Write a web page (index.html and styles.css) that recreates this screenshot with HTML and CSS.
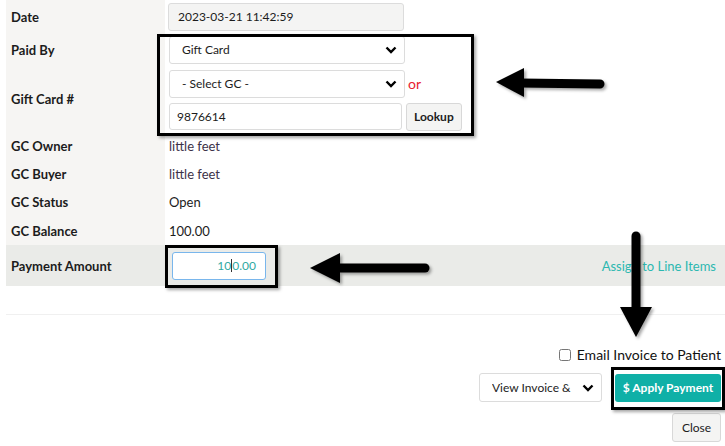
FILE: index.html
```html
<!DOCTYPE html>
<html lang="en">
<head>
    <meta charset="UTF-8">
    <title>Gift Card Payment</title>
    <link rel="stylesheet" href="styles.css">
</head>
<body>
    <div class="page">
        <div class="form">
            <div class="row row-date">
                <div class="label">Date</div>
                <div class="value">
                    <input type="text" class="field field-ro" value="2023-03-21 11:42:59" readonly>
                </div>
            </div>
            <div class="row row-paid">
                <div class="label">Paid By</div>
                <div class="value">
                    <select class="field select">
                        <option>Gift Card</option>
                    </select>
                </div>
            </div>
            <div class="row row-gc">
                <div class="label">Gift Card #</div>
                <div class="value stack">
                    <div class="line">
                        <select class="field select">
                            <option>- Select GC -</option>
                        </select>
                        <span class="or">or</span>
                    </div>
                    <div class="line">
                        <input type="text" class="field field-num" value="9876614">
                        <button class="btn btn-light">Lookup</button>
                    </div>
                </div>
            </div>
            <div class="row row-info">
                <div class="label">GC Owner</div>
                <div class="value text-muted">little feet</div>
            </div>
            <div class="row row-info">
                <div class="label">GC Buyer</div>
                <div class="value text-muted">little feet</div>
            </div>
            <div class="row row-info">
                <div class="label">GC Status</div>
                <div class="value">Open</div>
            </div>
            <div class="row row-info row-bal">
                <div class="label">GC Balance</div>
                <div class="value">100.00</div>
            </div>
            <div class="row row-amount">
                <div class="label">Payment Amount</div>
                <div class="value">
                    <div class="amount">10<span class="caret"></span>0.00</div>
                </div>
                <a class="assign" href="#">Assign to Line Items</a>
            </div>
        </div>

        <hr class="sep">

        <div class="footer">
            <label class="email"><input type="checkbox"> Email Invoice to Patient</label>
            <div class="actions">
                <select class="field select select-view">
                    <option>View Invoice &amp;</option>
                </select>
                <button class="btn btn-apply">$ Apply Payment</button>
            </div>
            <button class="btn btn-light btn-close">Close</button>
        </div>

        <!-- annotations drawn over the screenshot -->
        <div class="mark mark-gc"></div>
        <div class="mark mark-amount"></div>
        <div class="mark mark-apply"></div>
        <svg class="arrows" width="725" height="446" viewBox="0 0 725 446">
            <defs>
                <filter id="shadow" x="-20%" y="-20%" width="140%" height="140%">
                    <feDropShadow dx="2" dy="2" stdDeviation="1.5" flood-color="#000" flood-opacity="0.35"/>
                </filter>
            </defs>
            <g filter="url(#shadow)" fill="#000" stroke="#000">
                <line x1="520" y1="83" x2="600" y2="84" stroke-width="9" stroke-linecap="round"/>
                <polygon points="496,82 524,68 524,97" stroke="none"/>

                <line x1="336" y1="268" x2="425" y2="268" stroke-width="9" stroke-linecap="round"/>
                <polygon points="310,268 340,253 340,283" stroke="none"/>

                <line x1="636" y1="236" x2="636" y2="310" stroke-width="9" stroke-linecap="round"/>
                <polygon points="620,307 652,307 636,337" stroke="none"/>
            </g>
        </svg>
    </div>
</body>
</html>
```

FILE: styles.css
```css
*{
    margin: 0;
    padding: 0;
    box-sizing: border-box;
}
body{
    background-color: #fff;
    font-family: 'Lato', 'Liberation Sans', sans-serif;
    color: #222;
    font-size: 13px;
}
.page{
    position: relative;
    width: 725px;
    height: 446px;
    overflow: hidden;
}
.form{
    margin-left: 6px;
}
.row{
    display: flex;
    align-items: stretch;
}
.label{
    width: 159px;
    flex-shrink: 0;
    background-color: #f6f5f3;
    padding-left: 5px;
    font-weight: 700;
    display: flex;
    align-items: center;
    color: #1c1c1c;
}
.value{
    flex: 1;
    display: flex;
    align-items: center;
    padding-left: 3px;
    color: #1c1c1c;
}
.text-muted{
    color: #3c3248;
}
.row-date{ height: 33px; }
.row-paid{ height: 33px; }
.row-paid .value{ padding-left: 4px; }
.row-gc{ height: 66px; }
.row-info{ height: 28px; }
.row-info .value{ padding-left: 4px; }
.row-bal{ height: 29px; }
.row-amount{
    height: 41px;
    background-color: #eaebe8;
    align-items: center;
}
.row-amount .label{
    background-color: transparent;
    align-self: stretch;
}
.row-amount .value{
    padding-left: 7px;
}

.stack{
    flex-direction: column;
    align-items: flex-start;
    justify-content: center;
    gap: 5px;
    padding-left: 4px;
    padding-top: 2px;
}
.line{
    display: flex;
    align-items: center;
}
.field{
    width: 236px;
    height: 28px;
    border: 1px solid #dcdcdc;
    border-radius: 3px;
    background-color: #fff;
    font-family: 'Lato', 'Liberation Sans', sans-serif;
    font-size: 12px;
    color: #1c1c1c;
    padding: 0 8px;
    outline: none;
}
.field-ro{
    background-color: #f4f4f3;
    padding-left: 9px;
}
.field-num{
    width: 233px;
    height: 27px;
    padding-left: 7px;
}
.select{
    appearance: none;
    -webkit-appearance: none;
    padding-left: 12px;
    background-image: url("data:image/svg+xml;utf8,<svg xmlns='http://www.w3.org/2000/svg' width='12' height='8' viewBox='0 0 12 8'><path d='M1.5 1.5 L6 6 L10.5 1.5' fill='none' stroke='black' stroke-width='2.4'/></svg>");
    background-repeat: no-repeat;
    background-position: right 7px center;
}
.or{
    color: #e8202f;
    font-size: 14px;
    margin-left: 3px;
}
.btn{
    font-family: 'Lato', 'Liberation Sans', sans-serif;
    font-size: 12px;
    border-radius: 3px;
    cursor: pointer;
}
.btn-light{
    height: 28px;
    padding: 0 7px;
    margin-left: 4px;
    border: 1px solid #d8d8d8;
    background-color: #f4f4f3;
    color: #1c1c1c;
    font-weight: 700;
}
.amount{
    width: 94px;
    height: 28px;
    border: 1px solid #79b6ec;
    border-radius: 3px;
    background-color: #fff;
    color: #31a9a2;
    font-size: 12px;
    text-align: right;
    line-height: 26px;
    padding-right: 9px;
}
.caret{
    display: inline-block;
    width: 1px;
    height: 13px;
    background-color: #333;
    vertical-align: -2px;
}
.assign{
    color: #2cb8b0;
    text-decoration: none;
    font-size: 13px;
    margin-right: 9px;
}

.sep{
    border: none;
    border-top: 1px solid #f0f0f0;
    margin: 28px 0 0 6px;
}
.footer{
    display: flex;
    flex-direction: column;
    align-items: flex-end;
    padding-right: 4px;
    margin-top: 31px;
}
.email{
    display: flex;
    align-items: center;
    gap: 6px;
    font-size: 14px;
    color: #111;
}
.email input{
    width: 12px;
    height: 12px;
}
.actions{
    display: flex;
    align-items: center;
    gap: 13px;
    margin-top: 10px;
}
.select-view{
    width: 123px;
    height: 29px;
    padding-left: 12px;
}
.btn-apply{
    width: 106px;
    height: 28px;
    border: none;
    background-color: #0fb0a7;
    color: #fff;
    font-weight: 700;
    font-size: 12px;
}
.btn-close{
    margin-top: 11px;
    height: 29px;
    width: 49px;
    padding: 0;
    font-weight: 400;
    font-size: 12px;
}

.mark{
    position: absolute;
    border: 3px solid #000;
    box-shadow: 2px 2px 3px rgba(0, 0, 0, 0.35);
}
.mark-gc{
    left: 157px;
    top: 34px;
    width: 317px;
    height: 102px;
}
.mark-amount{
    left: 165px;
    top: 245px;
    width: 113px;
    height: 43px;
}
.mark-apply{
    left: 611px;
    top: 367px;
    width: 114px;
    height: 43px;
}
.arrows{
    position: absolute;
    left: 0;
    top: 0;
    pointer-events: none;
}
```
